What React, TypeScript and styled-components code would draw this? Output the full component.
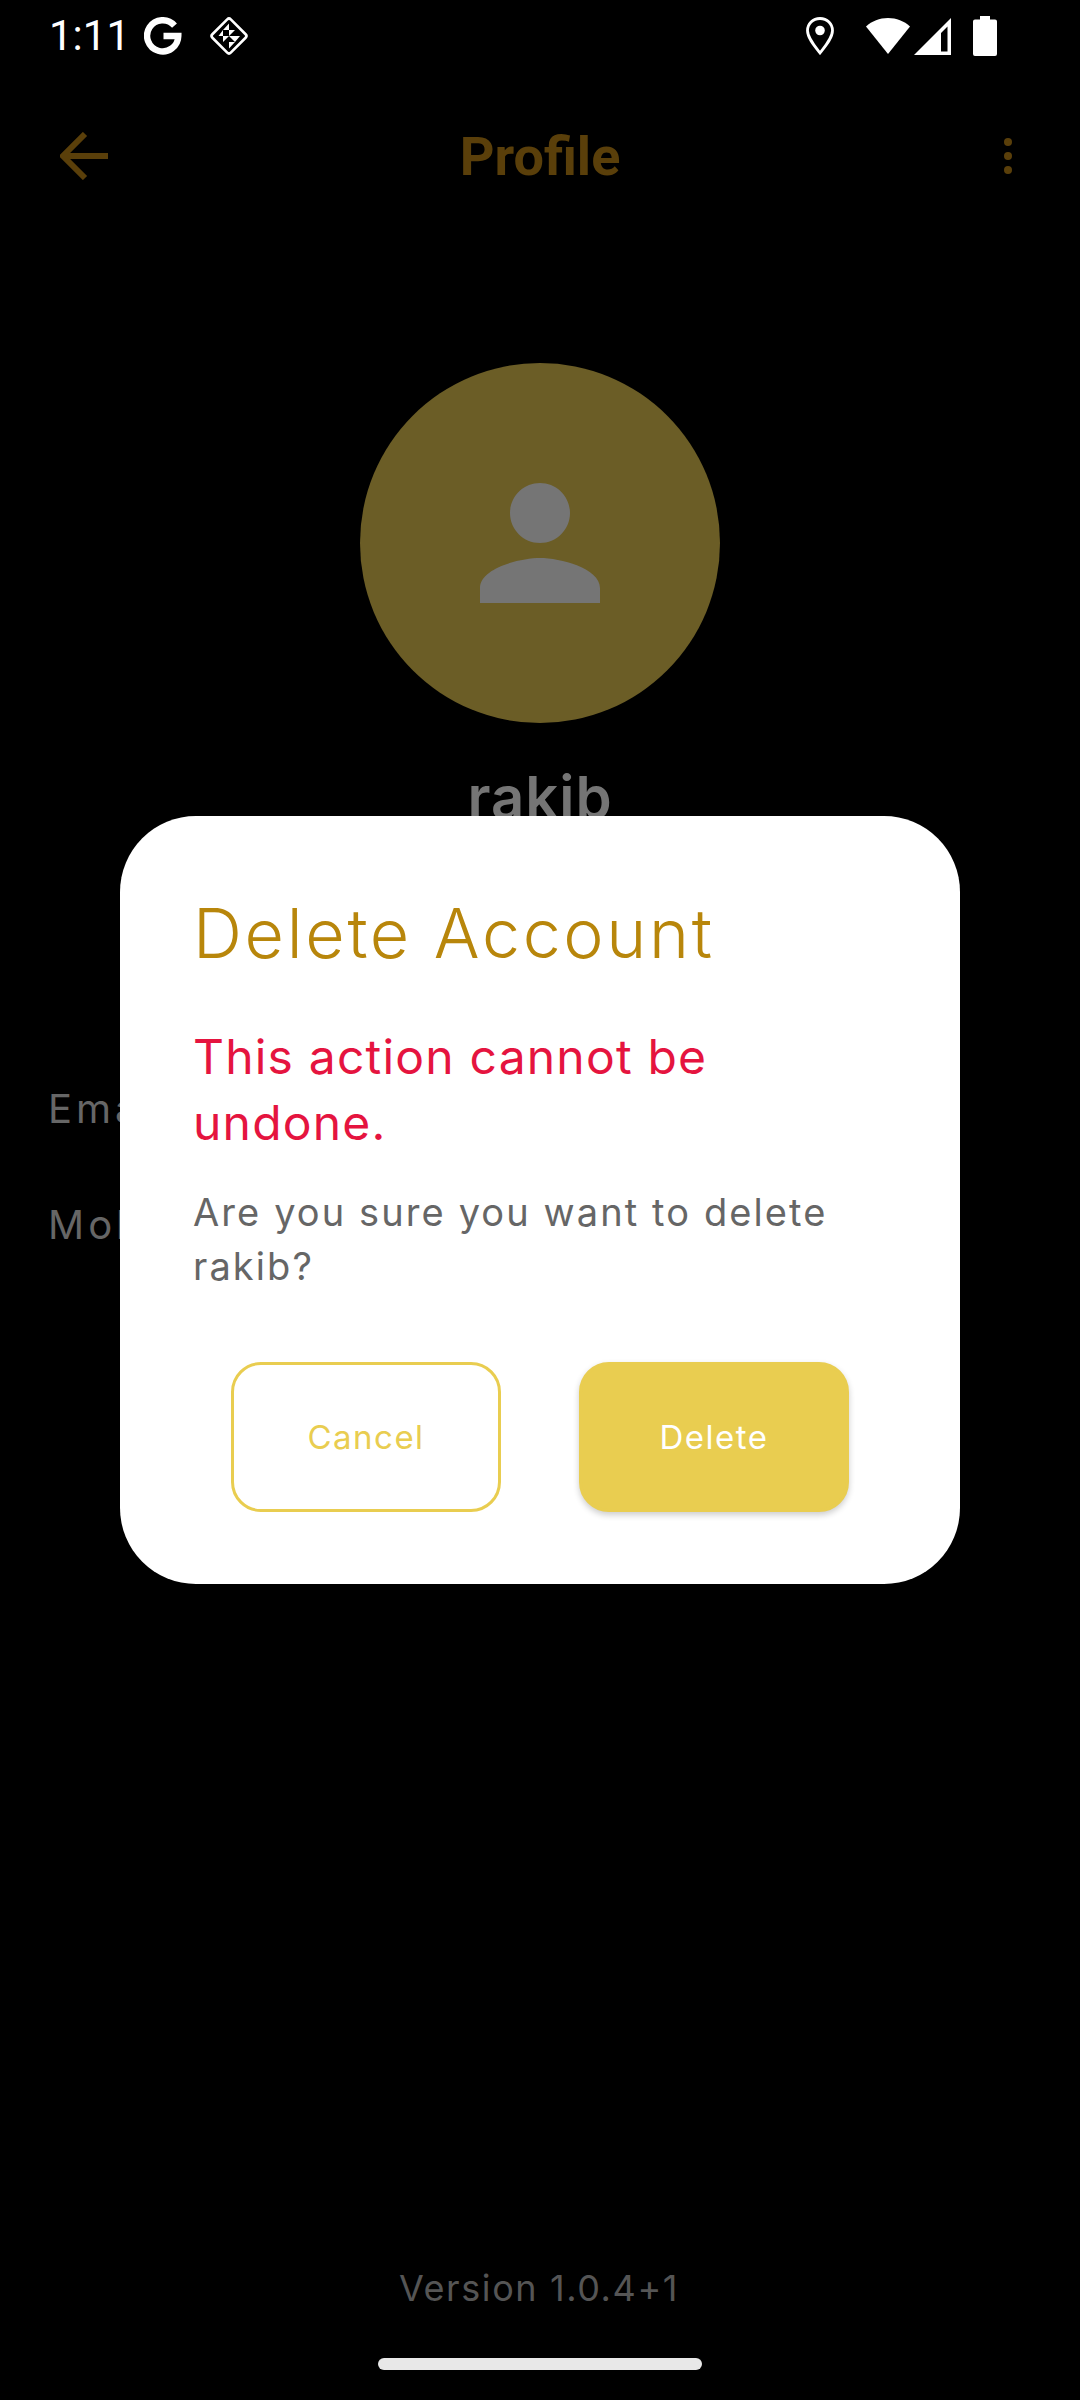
import React from 'react';
import styled, { createGlobalStyle } from 'styled-components';

const bodyFont = `'Inter', 'Open Sans', sans-serif`;

const GlobalStyle = createGlobalStyle`
  html, body {
    margin: 0;
    padding: 0;
    background: #000;
  }
  * {
    box-sizing: border-box;
  }
`

const Screen = styled.div`
  position: relative;
  display: flex;
  flex-direction: column;
  width: 1080px;
  height: 2400px;
  overflow: hidden;
  background: #000;
  font-family: ${bodyFont};
`

const StatusBar = styled.div`
  display: flex;
  align-items: center;
  justify-content: space-between;
  height: 72px;
  padding: 0 83px 0 49px;
  color: #fff;
`

const StatusGroup = styled.div`
  display: flex;
  align-items: center;
`

const Time = styled.span`
  font-family: 'Roboto', sans-serif;
  font-size: 42px;
  line-height: 72px;
  margin-right: 22px;
`

const AppBar = styled.div`
  display: grid;
  grid-template-columns: 1fr auto 1fr;
  align-items: center;
  height: 168px;
  padding: 0 68px 0 60px;
`

const AppTitle = styled.h1`
  margin: 0 0 0 8px;
  font-family: 'Roboto', sans-serif;
  font-weight: 700;
  font-size: 54px;
  color: #5a3f0a;
`

const AppBarEnd = styled.div`
  display: flex;
  justify-content: flex-end;
`

const Avatar = styled.div`
  display: flex;
  align-items: center;
  justify-content: center;
  align-self: center;
  width: 360px;
  height: 360px;
  margin-top: 123px;
  border-radius: 50%;
  background: #6b5d26;
`

const Name = styled.div`
  text-align: center;
  font-size: 58px;
  font-weight: 600;
  line-height: 64px;
  letter-spacing: 1px;
  margin-top: 42px;
  color: #757575;
`

const InfoLabel = styled.div<{ $top: number }>`
  margin: ${props => props.$top}px 0 0 48px;
  font-size: 40px;
  line-height: 48px;
  letter-spacing: 4px;
  color: #666;
`

const Version = styled.div`
  margin-top: auto;
  text-align: center;
  font-size: 36px;
  line-height: 44px;
  letter-spacing: 1.6px;
  padding-right: 2px;
  color: #555;
`

const HomeBar = styled.div`
  align-self: center;
  width: 324px;
  height: 12px;
  margin: 48px 0 30px;
  border-radius: 6px;
  background: #e8e8e8;
`

const Dialog = styled.div`
  position: absolute;
  left: 120px;
  top: 816px;
  width: 840px;
  height: 768px;
  padding: 79px 72px 0 73px;
  border-radius: 76px;
  background: #fff;
`

const DialogTitle = styled.h2`
  margin: 0;
  font-size: 68px;
  font-weight: 300;
  line-height: 76px;
  letter-spacing: 2.7px;
  color: #b8860b;
`

const Warning = styled.p`
  margin: 53px 0 0;
  font-size: 48px;
  line-height: 66px;
  letter-spacing: 1.2px;
  color: #e5143f;
`

const Message = styled.p`
  margin: 29px 0 0;
  font-size: 38px;
  line-height: 54px;
  letter-spacing: 2.1px;
  color: #666;
`

const Actions = styled.div`
  display: flex;
  justify-content: space-between;
  margin: 69px 38px 0;
  padding-right: 1px;
`

const ActionButton = styled.button<{ $filled?: boolean }>`
  width: 270px;
  height: 150px;
  padding: 0;
  font-family: ${bodyFont};
  font-size: 33px;
  letter-spacing: 1.5px;
  border-radius: 30px;
  border: 3px solid #e9cd50;
  color: ${props => props.$filled ? '#fff' : '#e9cd50'};
  background: ${props => props.$filled ? '#e9cd50' : '#fff'};
  box-shadow: ${props => props.$filled ? '0 3px 6px rgba(0, 0, 0, 0.2)' : 'none'};
`

const GoogleIcon = () => (
  <svg width="38" height="38" viewBox="0 0 38 38" style={{ marginLeft: -8, marginRight: 25 }}>
    <path d="M30.5 8.600A15.600 15.600 0 1 0 34.300 19H19.500" fill="none" stroke="#fff" strokeWidth="6.400" />
  </svg>
)

const DiamondIcon = () => (
  <svg width="44" height="44" viewBox="0 0 44 44">
    <rect x="9" y="9" width="26" height="26" rx="2.500" transform="rotate(45 22 22)" fill="none" stroke="#fff" strokeWidth="2.600" />
    <path d="M22 9.500v6.500h-6zM22 16h6l-6 6zM16 16v6l-4.500 0zM16 22h6l-6 6zM22 22h6v6zM28 22h5l-5 6zM22 28h6l-6 6.500z" fill="#fff" />
  </svg>
)

const PinIcon = () => (
  <svg width="30" height="40" viewBox="0 0 30 40" style={{ marginRight: 30 }}>
    <path d="M15 2.500C7.800 2.500 2.500 8 2.500 14.600 2.500 22 9.500 30 15 37c5.500-7 12.500-15 12.500-22.400C27.500 8 22.200 2.500 15 2.500z" fill="none" stroke="#fff" strokeWidth="2.800" />
    <circle cx="15" cy="14.500" r="4.800" fill="#fff" />
  </svg>
)

const WifiIcon = () => (
  <svg width="46" height="38" viewBox="0 0 46 38">
    <path d="M1 9.500C7 4 14.500 1 23 1s16 3 22 8.500L23 37z" fill="#fff" />
  </svg>
)

const SignalIcon = () => (
  <svg width="38" height="38" viewBox="0 0 38 38" style={{ margin: '0 21px 0 3px' }}>
    <path d="M37 1v37H0zM33.500 9.500 27 16v18.500h6.500z" fill="#fff" fillRule="evenodd" />
  </svg>
)

const BatteryIcon = () => (
  <svg width="24" height="40" viewBox="0 0 24 40">
    <path d="M7 0h10v3.500h5a2 2 0 0 1 2 2V38a2 2 0 0 1-2 2H2a2 2 0 0 1-2-2V5.500a2 2 0 0 1 2-2h5z" fill="#fff" />
  </svg>
)

const BackIcon = () => (
  <svg width="48" height="48" viewBox="0 0 48 48">
    <path d="M48 24H4M25 2 3 24l22 22" fill="none" stroke="#5a3f0a" strokeWidth="6" />
  </svg>
)

const MoreIcon = () => (
  <svg width="8" height="36" viewBox="0 0 8 36">
    <circle cx="4" cy="4" r="4" fill="#5a3f0a" />
    <circle cx="4" cy="18" r="4" fill="#5a3f0a" />
    <circle cx="4" cy="32" r="4" fill="#5a3f0a" />
  </svg>
)

const PersonIcon = () => (
  <svg width="180" height="180" viewBox="0 0 24 24">
    <path d="M12 12c2.210 0 4-1.790 4-4s-1.790-4-4-4-4 1.790-4 4 1.790 4 4 4zm0 2c-2.670 0-8 1.340-8 4v2h16v-2c0-2.660-5.330-4-8-4z" fill="#757575" />
  </svg>
)

const App = () => {
  return (
    <Screen>
      <GlobalStyle />
      <StatusBar>
        <StatusGroup>
          <Time>1:11</Time>
          <GoogleIcon />
          <DiamondIcon />
        </StatusGroup>
        <StatusGroup>
          <PinIcon />
          <WifiIcon />
          <SignalIcon />
          <BatteryIcon />
        </StatusGroup>
      </StatusBar>
      <AppBar>
        <BackIcon />
        <AppTitle>Profile</AppTitle>
        <AppBarEnd>
          <MoreIcon />
        </AppBarEnd>
      </AppBar>
      <Avatar>
        <PersonIcon />
      </Avatar>
      <Name>rakib</Name>
      <InfoLabel $top={256}>Email</InfoLabel>
      <InfoLabel $top={68}>Mobile</InfoLabel>
      <Version>Version 1.0.4+1</Version>
      <HomeBar />
      <Dialog>
        <DialogTitle>Delete Account</DialogTitle>
        <Warning>This action cannot be undone.</Warning>
        <Message>Are you sure you want to delete rakib?</Message>
        <Actions>
          <ActionButton>Cancel</ActionButton>
          <ActionButton $filled>Delete</ActionButton>
        </Actions>
      </Dialog>
    </Screen>
  )
}

export default App;
